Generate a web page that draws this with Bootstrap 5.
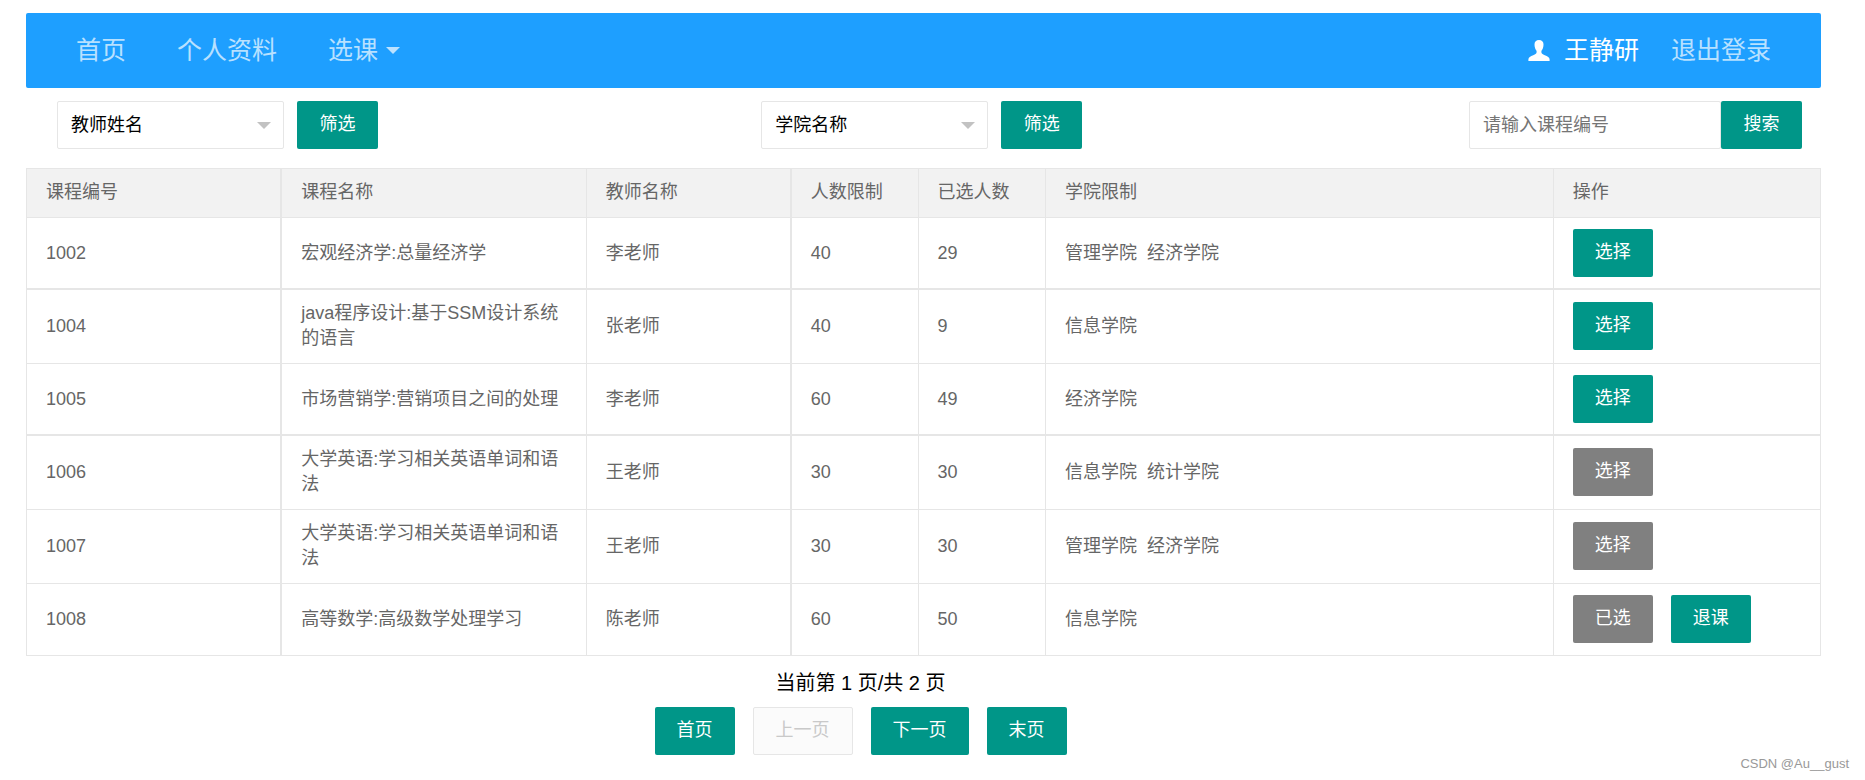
<!DOCTYPE html>
<html lang="zh-CN">
<head>
<meta charset="utf-8">
<meta name="viewport" content="width=device-width, initial-scale=1">
<title>选课</title>
<link href="https://cdn.jsdelivr.net/npm/bootstrap@5.3.0/dist/css/bootstrap.min.css" rel="stylesheet">
<style>
  body {
    font-family: "Liberation Sans", "Noto Sans CJK SC", sans-serif;
    font-size: 18px; line-height: 25px; font-weight: 400; color: #000; background: #fff;
    min-height: 100vh;
  }
  .page { padding: 13px 44px 0 26px; }
  .top-bar { background: #1e9fff; border-radius: 2px; height: 75px; padding: 0 50px; font-size: 25px; }
  .top-bar a { color: rgba(255,255,255,.7); text-decoration: none; }
  .top-bar a.user-link { color: #fff; }
  .menu { gap: 51px; }
  .user-menu { gap: 32px; }
  .user-link { gap: 14px; }
  .caret { width: 0; height: 0; border: 7px solid transparent; border-top-color: currentColor; border-bottom: 0; }
  .filters { display: grid; grid-template-columns: 41.4% 1fr auto; padding: 13px 19px 19px 0; }
  .filters .first { padding-left: 31px; }
  .filters form { gap: 13px; }
  .filters form.search { gap: 0; }
  .field.form-control, .field.form-select {
    height: 48px; border: 1px solid #e6e6e6; border-radius: 2px; font-size: 18px;
    color: #000; padding: 0 13px; line-height: 25px; background-color: #fff;
  }
  .field.form-select {
    width: 227px;
    background-image: url("data:image/svg+xml,%3Csvg xmlns='http://www.w3.org/2000/svg' viewBox='0 0 14 7'%3E%3Cpath d='M0 0h14L7 7z' fill='%23c2c2c2'/%3E%3C/svg%3E");
    background-size: 14px 7px; background-position: right 12px center;
  }
  .field.form-control { width: 252px; }
  .field::placeholder { color: #757575; opacity: 1; }
  .act.btn {
    height: 48px; padding: 0 22px 1px; border: 0; border-radius: 2px; font-size: 18px; line-height: 25px;
    color: #fff; background: #009688; white-space: nowrap;
  }
  .act.btn.off { background: #808080; opacity: 1; }
  .act.btn.none { background: #fbfbfb; border: 1px solid #e6e6e6; color: #c9c9c9; opacity: 1; }
  .filters .act.btn { min-width: 81px; }
  .courses.table { margin: 0; table-layout: fixed; border-color: #e6e6e6; }
  .courses.table > :not(caption) > * > * { padding: 11px 19px 12px; color: #666; font-weight: 400; border-color: #e6e6e6; }
  .courses.table > thead > tr > th { background: #f2f2f2; }
  .courses.table > :not(caption) > tr > :nth-child(1),
  .courses.table > :not(caption) > tr > :nth-child(3) { border-right-width: 2px; }
  .courses.table > tbody > tr:nth-child(1),
  .courses.table > tbody > tr:nth-child(3) { border-bottom-width: 2px; }
  .courses.table > tbody > tr:nth-child(1) > td,
  .courses.table > tbody > tr:nth-child(3) > td { padding-bottom: 11px; }
  .c1 { width: 14.2% } .c2 { width: 17% } .c3 { width: 11.4% } .c4 { width: 7.1% } .c6 { width: 28.3% } .c7 { width: 14.9% }
  .ops { gap: 18px; }
  .pager { margin: 15px 126px 0 0; }
  .pager p { font-size: 20px; margin: 0 0 11px; }
  .watermark { position: absolute; right: 16px; bottom: 4px; font-size: 13px; color: #999; }
</style>
</head>
<body class="position-relative">
<div class="page">
  <nav class="navbar top-bar d-flex justify-content-between">
    <div class="menu d-flex">
      <a href="#">首页</a>
      <a href="#">个人资料</a>
      <a href="#" class="d-flex align-items-center gap-2">选课<span class="caret"></span></a>
    </div>
    <div class="user-menu d-flex">
      <a href="#" class="user-link d-flex align-items-center">
        <svg width="22" height="22" viewBox="0 0 22 22" fill="currentColor" aria-hidden="true"><path d="M11 0C8.200 0 6.500 1.700 6.500 4.300c0 1.400.1 2.700.6 4 .4 1.300 1 2 1.400 2.500.3.800.2 1.700-.2 2.500-.5.900-1.700 1.300-3.100 1.900C2.500 16.300.4 17.300.4 19.500V21h21.200v-1.500c0-2.200-2.100-3.200-4.800-4.300-1.400-.6-2.600-1-3.100-1.900-.4-.8-.5-1.700-.2-2.500.4-.5 1-1.200 1.400-2.500.5-1.300.6-2.600.6-4C15.500 1.700 13.800 0 11 0z"/></svg>
        王静研
      </a>
      <a href="#">退出登录</a>
    </div>
  </nav>

  <div class="filters">
    <form class="first d-flex">
      <select class="form-select field" aria-label="教师姓名"><option>教师姓名</option></select>
      <button type="button" class="btn act">筛选</button>
    </form>
    <form class="d-flex">
      <select class="form-select field" aria-label="学院名称"><option>学院名称</option></select>
      <button type="button" class="btn act">筛选</button>
    </form>
    <form class="search d-flex">
      <input type="text" class="form-control field" placeholder="请输入课程编号" aria-label="课程编号">
      <button type="button" class="btn act">搜索</button>
    </form>
  </div>

  <table class="table table-bordered align-middle courses">
    <colgroup><col class="c1"><col class="c2"><col class="c3"><col class="c4"><col class="c4"><col class="c6"><col class="c7"></colgroup>
    <thead>
      <tr><th>课程编号</th><th>课程名称</th><th>教师名称</th><th>人数限制</th><th>已选人数</th><th>学院限制</th><th>操作</th></tr>
    </thead>
    <tbody>
      <tr><td>1002</td><td>宏观经济学:总量经济学</td><td>李老师</td><td>40</td><td>29</td><td>管理学院&nbsp; 经济学院</td><td><div class="ops d-flex"><button type="button" class="btn act">选择</button></div></td></tr>
      <tr><td>1004</td><td>java程序设计:基于SSM设计系统的语言</td><td>张老师</td><td>40</td><td>9</td><td>信息学院</td><td><div class="ops d-flex"><button type="button" class="btn act">选择</button></div></td></tr>
      <tr><td>1005</td><td>市场营销学:营销项目之间的处理</td><td>李老师</td><td>60</td><td>49</td><td>经济学院</td><td><div class="ops d-flex"><button type="button" class="btn act">选择</button></div></td></tr>
      <tr><td>1006</td><td>大学英语:学习相关英语单词和语法</td><td>王老师</td><td>30</td><td>30</td><td>信息学院&nbsp; 统计学院</td><td><div class="ops d-flex"><button type="button" class="btn act off" disabled>选择</button></div></td></tr>
      <tr><td>1007</td><td>大学英语:学习相关英语单词和语法</td><td>王老师</td><td>30</td><td>30</td><td>管理学院&nbsp; 经济学院</td><td><div class="ops d-flex"><button type="button" class="btn act off" disabled>选择</button></div></td></tr>
      <tr><td>1008</td><td>高等数学:高级数学处理学习</td><td>陈老师</td><td>60</td><td>50</td><td>信息学院</td><td><div class="ops d-flex"><button type="button" class="btn act off" disabled>已选</button><button type="button" class="btn act">退课</button></div></td></tr>
    </tbody>
  </table>

  <div class="pager text-center">
    <p>当前第 1 页/共 2 页</p>
    <div class="ops d-flex justify-content-center">
      <button type="button" class="btn act">首页</button>
      <button type="button" class="btn act none" disabled>上一页</button>
      <button type="button" class="btn act">下一页</button>
      <button type="button" class="btn act">末页</button>
    </div>
  </div>
</div>
<div class="watermark">CSDN @Au__gust</div>
<script src="https://cdn.jsdelivr.net/npm/bootstrap@5.3.0/dist/js/bootstrap.bundle.min.js"></script>
</body>
</html>
